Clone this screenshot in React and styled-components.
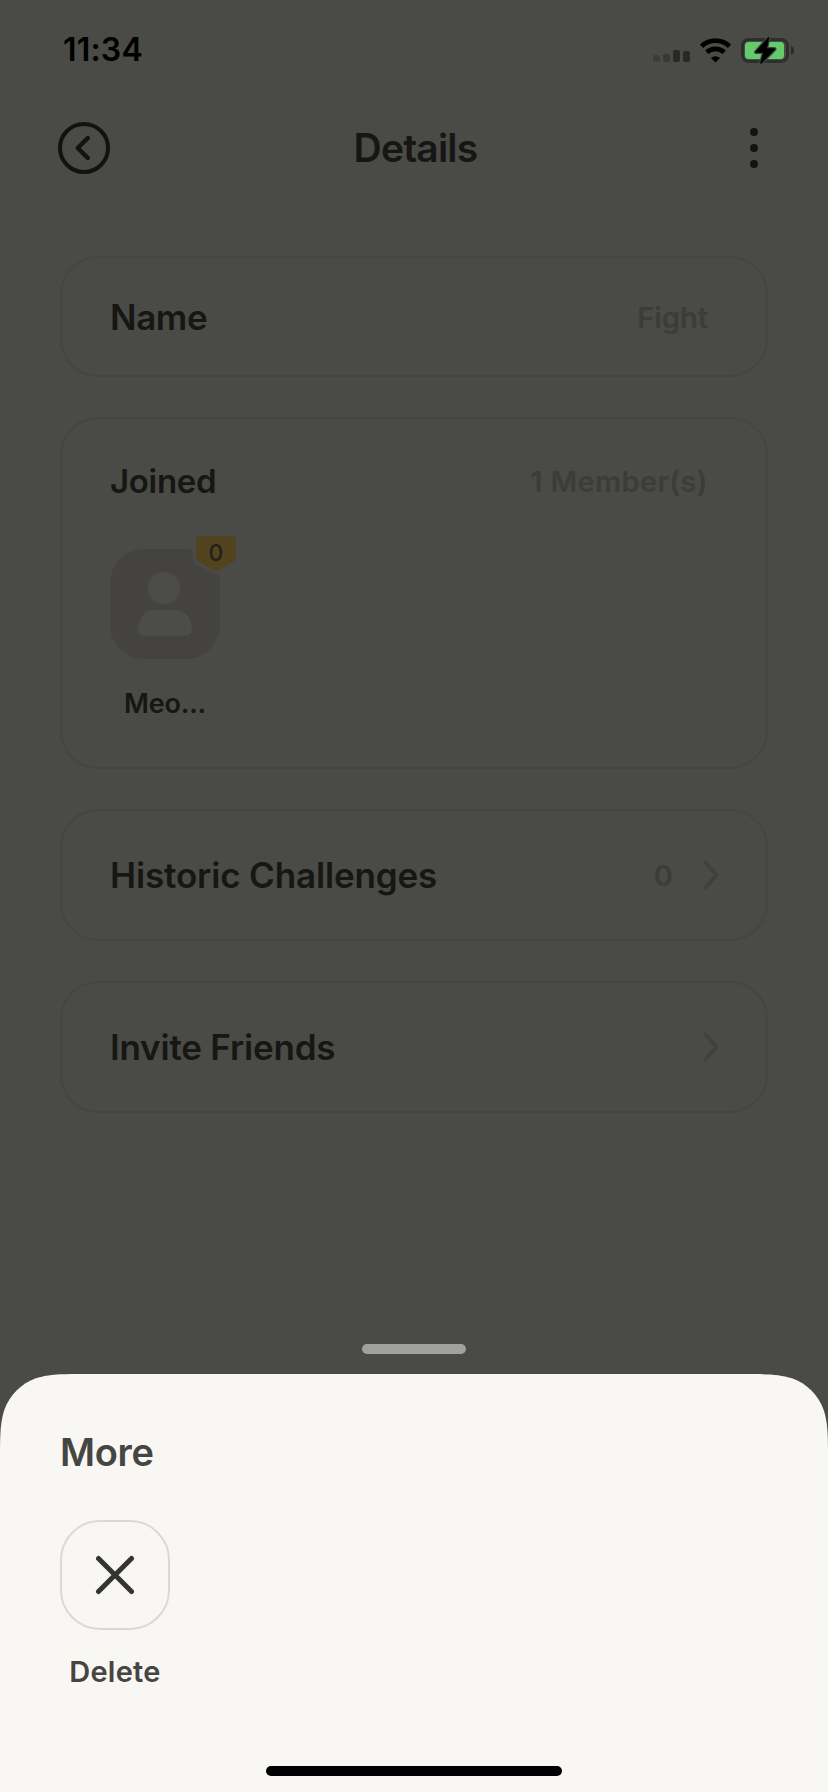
import React from "react";
import styled, { createGlobalStyle } from "styled-components";

const GlobalStyle = createGlobalStyle`
  * { box-sizing: border-box; }
  body { margin: 0; background: #4a4a46; }
`;

const Screen = styled.div`
  width: 828px;
  height: 1792px;
  display: flex;
  flex-direction: column;
  overflow: hidden;
  background: #4a4a46;
  font-family: Inter, "Liberation Sans", sans-serif;
  font-weight: 600;
  color: #161614;
`;

const StatusBar = styled.header`
  height: 98px;
  flex: none;
  display: flex;
  justify-content: space-between;
  align-items: center;
  padding: 2px 34px 0 63px;
  color: #000;
`;

const StatusIcons = styled.svg`
  display: block;
  width: 144px;
  height: 40px;
`;

const NavBar = styled.nav`
  height: 100px;
  flex: none;
  display: grid;
  grid-template-columns: 60px 1fr 60px;
  align-items: center;
  padding: 0 44px 0 54px;
`;

const IconButton = styled.button`
  display: flex;
  justify-content: center;
  align-items: center;
  width: 60px;
  height: 60px;
  padding: 0;
  border: 0;
  background: none;
  svg { display: block; }
`;

const Label = styled.span`
  display: block;
  white-space: nowrap;
  font-size: ${(p) => p.$size}px;
  line-height: 48px;
  letter-spacing: ${(p) => p.$track || 0}px;
  color: ${(p) => p.$color || "inherit"};
`;

const Value = styled(Label)`
  padding: 2px ${(p) => p.$inset || 0}px 0 0;
  color: #3c3c39;
`;

const Title = styled(Label)`
  padding-right: 7px;
  text-align: center;
`;

const CardList = styled.main`
  flex: 1;
  display: flex;
  flex-direction: column;
  gap: 40px;
  padding: 58px 60px 0;
`;

const Card = styled.section`
  height: ${(p) => p.$height}px;
  padding: ${(p) => p.$top || 0}px 47px 0 48px;
  border: 2px solid #454542;
  border-radius: 38px;
`;

const Row = styled.div`
  height: ${(p) => (p.$fill ? "100%" : "48px")};
  display: flex;
  align-items: center;
  justify-content: space-between;
`;

const Trailing = styled.div`
  display: flex;
  align-items: center;
  gap: 28px;
`;

const Member = styled.div`
  width: 110px;
  margin-top: 44px;
  display: flex;
  flex-direction: column;
  align-items: center;
  gap: 21px;
`;

const Avatar = styled.div`
  position: relative;
  width: 110px;
  height: 110px;
  border-radius: 34px;
  background: #454340;
`;

const Badge = styled.div`
  position: absolute;
  top: -16px;
  left: 82px;
  width: 48px;
  height: 43px;
  svg { position: absolute; inset: 0; }
`;

const BadgeCount = styled.span`
  position: relative;
  display: block;
  text-align: center;
  font-size: 23px;
  line-height: 40px;
  font-weight: 500;
  color: #241f17;
`;

const Handle = styled.div`
  width: 104px;
  height: 10px;
  flex: none;
  margin: 0 auto 20px;
  border-radius: 5px;
  background: #a1a19e;
`;

const Sheet = styled.section`
  width: 828px;
  height: 418px;
  flex: none;
  display: flex;
  flex-direction: column;
  padding: 54px 60px 16px;
  background: #f8f7f3;
  color: #454542;
  clip-path: path("M87 0H741C766 0 778.500 0 792 4.300C806.800 9.600 818.400 21.200 823.700 36C828 49.500 828 62 828 87V418H0V87C0 62 0 49.500 4.300 36C9.600 21.200 21.200 9.600 36 4.300C49.500 0 62 0 87 0Z");
`;

const Action = styled.div`
  width: 110px;
  margin-top: 44px;
  display: flex;
  flex-direction: column;
  align-items: center;
  gap: 18px;
`;

const ActionButton = styled.button`
  width: 110px;
  height: 110px;
  flex: none;
  display: flex;
  align-items: center;
  justify-content: center;
  padding: 0;
  border: 2px solid #d9d9d5;
  border-radius: 40px;
  background: none;
`;

const HomeIndicator = styled.div`
  width: 296px;
  height: 10px;
  margin: auto auto 0;
  border-radius: 5px;
  background: #000;
`;

const Chevron = () => (
  <svg width="18" height="32" viewBox="0 0 18 32" fill="none" stroke="#40403d" strokeWidth="3.4" strokeLinecap="round" strokeLinejoin="round">
    <path d="M4 3L15.500 16L4 29" />
  </svg>
);

export default function App() {
  return (
    <Screen>
      <GlobalStyle />
      <StatusBar>
        <Label $size={32} $track={0.2}>11:34</Label>
        <StatusIcons viewBox="650 29 144 40">
          <rect x="653" y="54" width="7" height="7" rx="2" fill="#3c3c39" />
          <rect x="663" y="53" width="7" height="8" rx="2" fill="#383835" />
          <rect x="673" y="49" width="7" height="12" rx="2" fill="#282826" />
          <rect x="683" y="50" width="7" height="11" rx="2" fill="#282826" />
          <g fill="none" stroke="#000" strokeWidth="4.800">
            <path d="M701.500 45.200A20.500 20.500 0 0 1 729.500 45.200" />
            <path d="M706.800 51.300A12.800 12.800 0 0 1 724.200 51.300" />
          </g>
          <path d="M710.900 57A7 7 0 0 1 720.100 57L715.500 61.400Z" />
          <rect x="742.500" y="38.500" width="45" height="22" rx="6.500" fill="none" stroke="#2e2e2c" strokeWidth="3" />
          <path d="M791 45Q794 46 794 49.500T791 54Z" fill="#2b2b29" />
          <rect x="745" y="41" width="39" height="17" rx="3.500" fill="#65ca69" />
          <path d="M768.500 37L756 51H764L761 62L774.500 48H766Z" fill="#000" stroke="#3f4a3c" strokeWidth="4" strokeLinejoin="round" />
          <path d="M768.500 37L756 51H764L761 62L774.500 48H766Z" stroke="#000" strokeWidth="1.500" strokeLinejoin="round" />
        </StatusIcons>
      </StatusBar>
      <NavBar>
        <IconButton aria-label="Back">
          <svg width="52" height="52" viewBox="0 0 52 52" fill="none" stroke="#12120f" strokeWidth="4" strokeLinecap="round" strokeLinejoin="round">
            <circle cx="26" cy="26" r="24" />
            <path d="M29.800 16L19.800 26L29.800 36" strokeWidth="4.400" />
          </svg>
        </IconButton>
        <Title $size={39} $track={-0.8}>Details</Title>
        <IconButton aria-label="More options">
          <svg width="8" height="40" viewBox="0 0 8 40" fill="#12120f">
            <circle cx="4" cy="4" r="4" />
            <circle cx="4" cy="20" r="4" />
            <circle cx="4" cy="36" r="4" />
          </svg>
        </IconButton>
      </NavBar>
      <CardList>
        <Card $height={121}>
          <Row $fill>
            <Label $size={35} $track={-0.4}>Name</Label>
            <Value $size={29} $inset={11}>Fight</Value>
          </Row>
        </Card>
        <Card $height={352} $top={38}>
          <Row>
            <Label $size={33} $track={-0.3}>Joined</Label>
            <Value $size={29} $inset={11} $track={0.35}>1 Member(s)</Value>
          </Row>
          <Member>
            <Avatar>
              <svg width="110" height="110" viewBox="0 0 110 110" fill="#4c4c49">
                <circle cx="54" cy="39" r="16" />
                <path d="M43 61H66C75 61 82 70 82 80Q82 87 75 87H34Q27 87 28 79C30 68 35 61 43 61Z" />
              </svg>
              <Badge>
                <svg width="48" height="43" viewBox="0 0 48 43">
                  <path d="M8 3H40Q44 3 44 7V25Q44 27 42 28.500L27 37Q24 39 21 37L6 28.500Q4 27 4 25V7Q4 3 8 3Z" fill="#50431e" stroke="#4a4a46" strokeWidth="6" paintOrder="stroke" />
                </svg>
                <BadgeCount>0</BadgeCount>
              </Badge>
            </Avatar>
            <Label $size={27} $track={-0.2}>Meo...</Label>
          </Member>
        </Card>
        <Card $height={132}>
          <Row $fill>
            <Label $size={35} $track={-0.15}>Historic Challenges</Label>
            <Trailing>
              <Value $size={29}>0</Value>
              <Chevron />
            </Trailing>
          </Row>
        </Card>
        <Card $height={132}>
          <Row $fill>
            <Label $size={35} $track={-0.2}>Invite Friends</Label>
            <Chevron />
          </Row>
        </Card>
      </CardList>
      <Handle />
      <Sheet>
        <Label $size={38} $track={-0.3}>More</Label>
        <Action>
          <ActionButton aria-label="Delete">
            <svg width="40" height="40" viewBox="0 0 40 40" stroke="#343431" strokeWidth="5" strokeLinecap="round">
              <path d="M3.500 3.500L36.500 36.500M36.500 3.500L3.500 36.500" />
            </svg>
          </ActionButton>
          <Label $size={29} $track={0.25}>Delete</Label>
        </Action>
        <HomeIndicator />
      </Sheet>
    </Screen>
  );
}
